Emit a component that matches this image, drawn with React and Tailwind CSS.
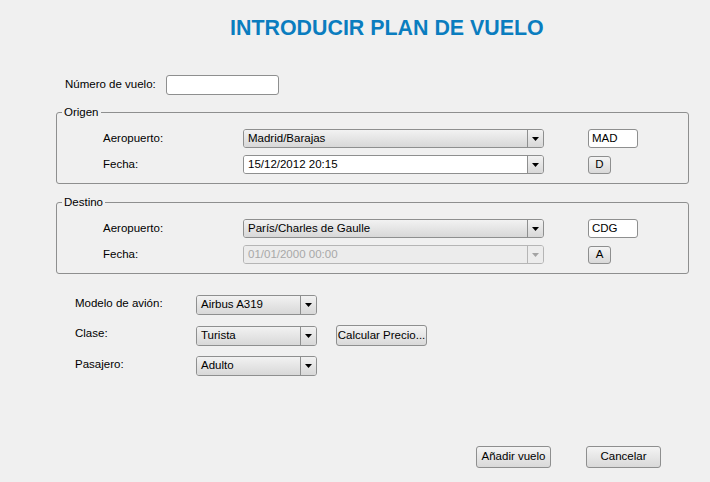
import React from "react";

const Arrow = ({ disabled }) => (
  <svg width="7" height="4" viewBox="0 0 7 4">
    <path d="M0 0H7L3.5 4Z" fill={disabled ? "#a3a3a3" : "#000"} />
  </svg>
);

function Combo({ value, width, height = 19, white, disabled }) {
  const face = disabled
    ? "bg-[#ececec] text-[#a8a8a8]"
    : white
    ? "bg-white text-black"
    : "bg-linear-to-b from-[#f2f2f2] to-[#d8d8d8] text-black";
  const border = disabled ? "border-[#b5b5b5]" : "border-[#8e8f8f]";
  return (
    <div
      className={`flex border ${border} rounded-[3px] overflow-hidden`}
      style={{ width, height }}
    >
      <div className={`flex-1 flex items-center pl-[4px] ${face}`}>{value}</div>
      <div
        className={`w-[16px] flex items-center justify-center border-l ${border} ${
          disabled ? "bg-[#ececec]" : "bg-linear-to-b from-[#f2f2f2] to-[#d8d8d8]"
        }`}
      >
        <Arrow disabled={disabled} />
      </div>
    </div>
  );
}

const Field = ({ value, w, h }) => (
  <div
    className="border border-[#8e8f8f] rounded-[3px] bg-white flex items-center pl-[3px]"
    style={{ width: w, height: h }}
  >
    {value}
  </div>
);

const Button = ({ label, w, h }) => (
  <div
    className="border border-[#8e8f8f] rounded-[3px] bg-linear-to-b from-[#f4f4f4] to-[#d9d9d9] flex items-center justify-center"
    style={{ width: w, height: h }}
  >
    {label}
  </div>
);

function Group({ title, rows, mt }) {
  return (
    <fieldset
      className={`ml-[56px] w-[633px] border border-[#8e8f8f] rounded-[3px] pt-[10px] pb-[9px] ${mt}`}
    >
      <legend className="ml-[5px] px-[2px] leading-[14px]">{title}</legend>
      <div className="flex flex-col gap-[7px] pl-[46px]">
        {rows.map((r) => (
          <div key={r.label} className="flex items-center">
            <div className="w-[140px]">{r.label}</div>
            <Combo value={r.value} width={301} white={r.white} disabled={r.disabled} height={r.h} />
            <div className="ml-[44px]">{r.side}</div>
          </div>
        ))}
      </div>
    </fieldset>
  );
}

export default function App() {
  return (
    <div className="w-[710px] h-[482px] bg-[#f0f0f0] overflow-hidden flex flex-col font-['Liberation_Sans',Arial,sans-serif] text-[11.5px] text-black">
      <h1 className="mt-[16px] pl-[230px] leading-[24px] text-[21.4px] font-bold text-[#0a7dbf]">
        INTRODUCIR PLAN DE VUELO
      </h1>

      <div className="mt-[35px] pl-[65px] flex items-center">
        <div className="w-[101px]">Número de vuelo:</div>
        <Field w={113} h={20} />
      </div>

      <Group
        title="Origen"
        mt="mt-[10px]"
        rows={[
          { label: "Aeropuerto:", value: "Madrid/Barajas", h: 19, side: <Field value="MAD" w={50} h={19} /> },
          { label: "Fecha:", value: "15/12/2012 20:15", white: true, h: 19, side: <Button label="D" w={23} h={18} /> },
        ]}
      />

      <Group
        title="Destino"
        mt="mt-[11px]"
        rows={[
          { label: "Aeropuerto:", value: "París/Charles de Gaulle", h: 19, side: <Field value="CDG" w={50} h={19} /> },
          { label: "Fecha:", value: "01/01/2000 00:00", disabled: true, h: 19, side: <Button label="A" w={23} h={18} /> },
        ]}
      />

      <div className="mt-[21px] pl-[75px] flex flex-col gap-[10px]">
        <div className="flex items-center">
          <div className="w-[121px] -mt-[3px]">Modelo de avión:</div>
          <Combo value="Airbus A319" width={121} height={20} />
        </div>
        <div className="flex items-center">
          <div className="w-[121px] -mt-[3px]">Clase:</div>
          <Combo value="Turista" width={121} height={20} />
          <div className="ml-[19px]">
            <Button label="Calcular Precio..." w={91} h={21} />
          </div>
        </div>
        <div className="flex items-center">
          <div className="w-[121px] -mt-[3px]">Pasajero:</div>
          <Combo value="Adulto" width={121} height={20} />
        </div>
      </div>

      <div className="mt-[70px] pl-[476px] flex gap-[35px]">
        <Button label="Añadir vuelo" w={75} h={22} />
        <Button label="Cancelar" w={75} h={22} />
      </div>
    </div>
  );
}
